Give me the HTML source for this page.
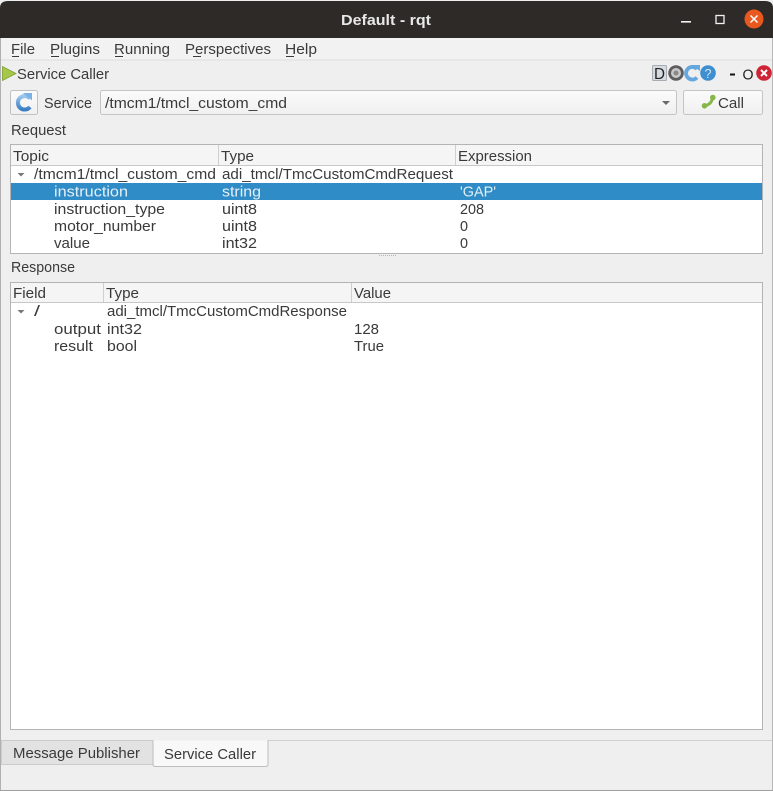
<!DOCTYPE html>
<html>
<head>
<meta charset="utf-8">
<title>Default - rqt</title>
<style>
html,body{margin:0;padding:0;background:#efefef;width:773px;height:791px;overflow:hidden}
svg{display:block}
text{font-family:"Liberation Sans",sans-serif;font-size:15px;fill:#3a3a3a}
</style>
</head>
<body>
<svg xmlns="http://www.w3.org/2000/svg" width="773" height="791" viewBox="0 0 773 791">
<defs>
<linearGradient id="btn" x1="0" y1="0" x2="0" y2="1"><stop offset="0" stop-color="#fbfbfb"/><stop offset="1" stop-color="#f0f0f0"/></linearGradient>
<linearGradient id="rf" x1="0" y1="0" x2="0" y2="1"><stop offset="0" stop-color="#9cc8ee"/><stop offset="1" stop-color="#3a7fc4"/></linearGradient>
</defs>
<rect width="773" height="791" fill="#efefef"/>
<!-- window edges -->
<rect x="0" y="38" width="1" height="753" fill="#b0b0b0"/>
<rect x="772" y="38" width="1" height="753" fill="#b8b8b8"/>
<rect x="0" y="790" width="773" height="1" fill="#a0a0a0"/>
<!-- title bar -->
<path d="M0 38V8Q0 1 8 1H765Q773 1 773 8V38Z" fill="#2d2a28"/>
<text x="341" y="25" textLength="90" lengthAdjust="spacingAndGlyphs" style="font-weight:bold;font-size:15px;fill:#e8e8e6">Default - rqt</text>
<rect x="681" y="21" width="10" height="1.600" fill="#f2f2f2"/>
<rect x="716" y="15.500" width="8" height="8" fill="none" stroke="#f2f2f2" stroke-width="1.300"/>
<circle cx="754" cy="19" r="9.500" fill="#e9581f"/>
<path d="M750.500 15.500L757.500 22.500M757.500 15.500L750.500 22.500" stroke="#fff" stroke-width="1.500"/>
<!-- menu -->
<rect x="1" y="38" width="771" height="22" fill="#f2f2f2"/>
<rect x="1" y="59.500" width="771" height="1" fill="#dcdcdc"/>
<text x="11" y="54" textLength="24" lengthAdjust="spacingAndGlyphs">File</text>
<rect x="12" y="56" width="7" height="1" fill="#3a3a3a"/>
<text x="50" y="54" textLength="50" lengthAdjust="spacingAndGlyphs">Plugins</text>
<rect x="51" y="56" width="8" height="1" fill="#3a3a3a"/>
<text x="114" y="54" textLength="56" lengthAdjust="spacingAndGlyphs">Running</text>
<rect x="115" y="56" width="8" height="1" fill="#3a3a3a"/>
<text x="185" y="54" textLength="86" lengthAdjust="spacingAndGlyphs">Perspectives</text>
<rect x="193" y="56" width="8" height="1" fill="#3a3a3a"/>
<text x="285" y="54" textLength="32" lengthAdjust="spacingAndGlyphs">Help</text>
<rect x="286" y="56" width="8" height="1" fill="#3a3a3a"/>
<!-- plugin title -->
<path d="M2.500 66.500V80.500L16 73.500Z" fill="#a6c848" stroke="#7f9f35" stroke-width=".8"/>
<text x="17" y="79" textLength="92" lengthAdjust="spacingAndGlyphs">Service Caller</text>
<rect x="652.500" y="65.500" width="14" height="15" rx="1" fill="#d6dbe2" stroke="#a9adb3"/>
<text x="654" y="79" textLength="11" lengthAdjust="spacingAndGlyphs" style="fill:#222;font-size:15.500px">D</text>
<circle cx="676" cy="73" r="7.800" fill="#5d5d5d"/>
<circle cx="676" cy="73" r="5" fill="#c9c9c9"/>
<circle cx="676" cy="73" r="2.500" fill="#888"/>
<path d="M697 69A6.300 6.300 0 1 0 697 77.500" fill="none" stroke="#65a8e0" stroke-width="3.800"/>
<path d="M691 65H700V71Z" fill="#65a8e0"/>
<circle cx="708" cy="73" r="7.800" fill="#3f8fd0"/>
<text x="704.500" y="78" textLength="7" lengthAdjust="spacingAndGlyphs" style="fill:#cfe5f7;font-size:13px;font-weight:normal">?</text>
<rect x="730" y="73.500" width="5" height="2" fill="#111"/>
<text x="742.500" y="79.500" textLength="11" lengthAdjust="spacingAndGlyphs" style="fill:#222;font-size:15px">O</text>
<circle cx="764" cy="73" r="7.800" fill="#cf2436"/>
<path d="M761 70L767 76M767 70L761 76" stroke="#fff" stroke-width="2"/>
<!-- toolbar -->
<rect x="10.500" y="90.500" width="27" height="24" rx="2" fill="url(#btn)" stroke="#c0c0c0"/>
<path d="M30 98.500A6.800 6.800 0 1 0 30 107" fill="none" stroke="url(#rf)" stroke-width="4"/>
<path d="M23 93H32V100.500Z" fill="#7ab2e3"/>
<text x="44" y="108" textLength="48" lengthAdjust="spacingAndGlyphs">Service</text>
<rect x="100.500" y="90.500" width="576" height="24" rx="2" fill="url(#btn)" stroke="#c4c4c4"/>
<text x="105" y="108" textLength="182" lengthAdjust="spacingAndGlyphs">/tmcm1/tmcl_custom_cmd</text>
<path d="M662 101H670L666 105Z" fill="#6a6a6a"/>
<rect x="683.500" y="90.500" width="79" height="24" rx="2" fill="url(#btn)" stroke="#c4c4c4"/>
<path d="M712.500 97.500Q712 104 704.500 106" fill="none" stroke="#86b548" stroke-width="3" stroke-linecap="round"/>
<circle cx="712.800" cy="97.500" r="2.800" fill="#86b548"/>
<circle cx="704.500" cy="105.800" r="2.800" fill="#86b548"/>
<text x="718" y="108" textLength="26" lengthAdjust="spacingAndGlyphs">Call</text>
<!-- Request -->
<text x="11" y="135" textLength="55" lengthAdjust="spacingAndGlyphs">Request</text>
<rect x="10.500" y="144.500" width="752" height="109" fill="#fff" stroke="#b4b4b4"/>
<rect x="11" y="145" width="751" height="20" fill="#f5f5f5"/>
<rect x="11" y="165" width="751" height="1" fill="#c8c8c8"/>
<rect x="218" y="145" width="1" height="20" fill="#cfcfcf"/>
<rect x="455" y="145" width="1" height="20" fill="#cfcfcf"/>
<text x="13" y="161" textLength="36" lengthAdjust="spacingAndGlyphs">Topic</text>
<text x="221" y="161" textLength="33" lengthAdjust="spacingAndGlyphs">Type</text>
<text x="458" y="161" textLength="74" lengthAdjust="spacingAndGlyphs">Expression</text>
<path d="M17.500 173H24.500L21 176.500Z" fill="#777"/>
<text x="34" y="179" textLength="182" lengthAdjust="spacingAndGlyphs">/tmcm1/tmcl_custom_cmd</text>
<text x="222" y="179" textLength="231" lengthAdjust="spacingAndGlyphs">adi_tmcl/TmcCustomCmdRequest</text>
<rect x="11" y="183" width="751" height="17" fill="#308cc6"/>
<text x="54" y="196.500" textLength="74" lengthAdjust="spacingAndGlyphs" style="fill:#e4f0f8">instruction</text>
<text x="222" y="196.500" textLength="39" lengthAdjust="spacingAndGlyphs" style="fill:#e4f0f8">string</text>
<text x="460" y="196.500" textLength="36" lengthAdjust="spacingAndGlyphs" style="fill:#e4f0f8">'GAP'</text>
<text x="54" y="214" textLength="111" lengthAdjust="spacingAndGlyphs">instruction_type</text>
<text x="222" y="214" textLength="35" lengthAdjust="spacingAndGlyphs">uint8</text>
<text x="460" y="214" textLength="24" lengthAdjust="spacingAndGlyphs">208</text>
<text x="54" y="231" textLength="102" lengthAdjust="spacingAndGlyphs">motor_number</text>
<text x="222" y="231" textLength="35" lengthAdjust="spacingAndGlyphs">uint8</text>
<text x="460" y="231" textLength="8" lengthAdjust="spacingAndGlyphs">0</text>
<text x="54" y="248" textLength="36" lengthAdjust="spacingAndGlyphs">value</text>
<text x="222" y="248" textLength="35" lengthAdjust="spacingAndGlyphs">int32</text>
<text x="460" y="248" textLength="8" lengthAdjust="spacingAndGlyphs">0</text>
<path d="M379 255.500H397" stroke="#b5b5b5" stroke-width="1" stroke-dasharray="1 1"/>
<!-- Response -->
<text x="11" y="272" textLength="64" lengthAdjust="spacingAndGlyphs">Response</text>
<rect x="10.500" y="282.500" width="752" height="447" fill="#fff" stroke="#b4b4b4"/>
<rect x="11" y="283" width="751" height="19" fill="#f5f5f5"/>
<rect x="11" y="302" width="751" height="1" fill="#c8c8c8"/>
<rect x="103" y="283" width="1" height="19" fill="#cfcfcf"/>
<rect x="351" y="283" width="1" height="19" fill="#cfcfcf"/>
<text x="13" y="298" textLength="33" lengthAdjust="spacingAndGlyphs">Field</text>
<text x="106" y="298" textLength="33" lengthAdjust="spacingAndGlyphs">Type</text>
<text x="354" y="298" textLength="37" lengthAdjust="spacingAndGlyphs">Value</text>
<path d="M17.500 310H24.500L21 313.500Z" fill="#777"/>
<text x="34" y="316" textLength="6" lengthAdjust="spacingAndGlyphs">/</text>
<text x="107" y="316" textLength="240" lengthAdjust="spacingAndGlyphs">adi_tmcl/TmcCustomCmdResponse</text>
<text x="54" y="334" textLength="47" lengthAdjust="spacingAndGlyphs">output</text>
<text x="107" y="334" textLength="35" lengthAdjust="spacingAndGlyphs">int32</text>
<text x="354" y="334" textLength="25" lengthAdjust="spacingAndGlyphs">128</text>
<text x="54" y="351" textLength="39" lengthAdjust="spacingAndGlyphs">result</text>
<text x="107" y="351" textLength="30" lengthAdjust="spacingAndGlyphs">bool</text>
<text x="354" y="351" textLength="30" lengthAdjust="spacingAndGlyphs">True</text>
<!-- tabs -->
<rect x="268" y="740" width="504" height="1" fill="#cfcfcf"/>
<rect x="1.500" y="740.500" width="151.500" height="24" fill="#e2e2e2" stroke="#cbcbcb"/>
<text x="13" y="758" textLength="127" lengthAdjust="spacingAndGlyphs">Message Publisher</text>
<path d="M153 740.500V764Q153 766.500 155.500 766.500H265.500Q268 766.500 268 764V740.500" fill="#f8f8f8" stroke="#bdbdbd"/>
<text x="164" y="759" textLength="92" lengthAdjust="spacingAndGlyphs">Service Caller</text>
</svg>
</body>
</html>
